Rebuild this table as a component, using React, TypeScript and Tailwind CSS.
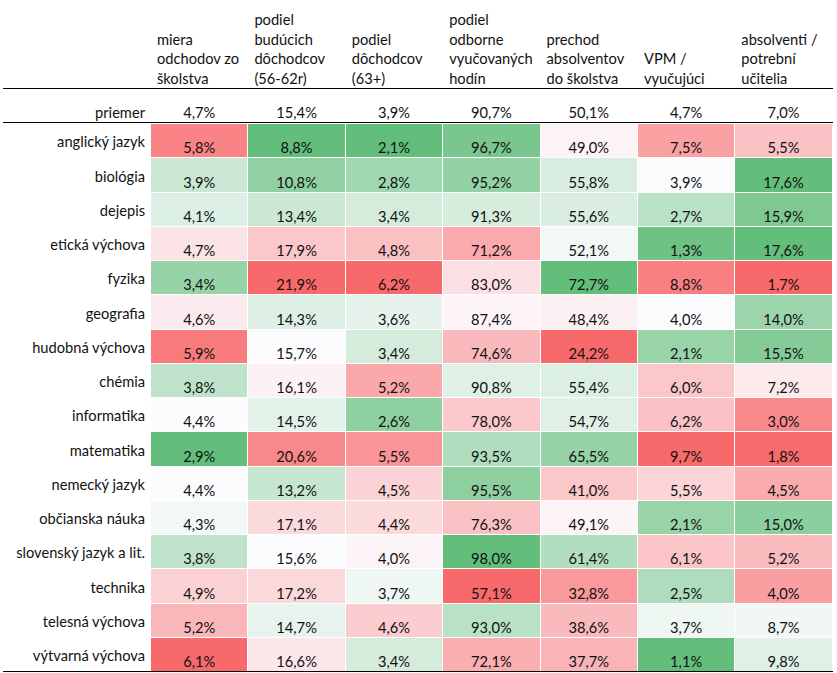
const headers = [
  ['miera', 'odchodov zo', 'školstva'],
  ['podiel', 'budúcich', 'dôchodcov', '(56-62r)'],
  ['podiel', 'dôchodcov', '(63+)'],
  ['podiel', 'odborne', 'vyučovaných', 'hodín'],
  ['prechod', 'absolventov', 'do školstva'],
  ['VPM /', 'vyučujúci'],
  ['absolventi /', 'potrební', 'učitelia'],
]

const average = [4.7, 15.4, 3.9, 90.7, 50.1, 4.7, 7.0]

// true = a higher value is better (green)
const higherIsGreen = [false, false, false, true, true, false, true]

const rows: { label: string; values: number[] }[] = [
  { label: 'anglický jazyk', values: [5.8, 8.8, 2.1, 96.7, 49.0, 7.5, 5.5] },
  { label: 'biológia', values: [3.9, 10.8, 2.8, 95.2, 55.8, 3.9, 17.6] },
  { label: 'dejepis', values: [4.1, 13.4, 3.4, 91.3, 55.6, 2.7, 15.9] },
  { label: 'etická výchova', values: [4.7, 17.9, 4.8, 71.2, 52.1, 1.3, 17.6] },
  { label: 'fyzika', values: [3.4, 21.9, 6.2, 83.0, 72.7, 8.8, 1.7] },
  { label: 'geografia', values: [4.6, 14.3, 3.6, 87.4, 48.4, 4.0, 14.0] },
  { label: 'hudobná výchova', values: [5.9, 15.7, 3.4, 74.6, 24.2, 2.1, 15.5] },
  { label: 'chémia', values: [3.8, 16.1, 5.2, 90.8, 55.4, 6.0, 7.2] },
  { label: 'informatika', values: [4.4, 14.5, 2.6, 78.0, 54.7, 6.2, 3.0] },
  { label: 'matematika', values: [2.9, 20.6, 5.5, 93.5, 65.5, 9.7, 1.8] },
  { label: 'nemecký jazyk', values: [4.4, 13.2, 4.5, 95.5, 41.0, 5.5, 4.5] },
  { label: 'občianska náuka', values: [4.3, 17.1, 4.4, 76.3, 49.1, 2.1, 15.0] },
  { label: 'slovenský jazyk a lit.', values: [3.8, 15.6, 4.0, 98.0, 61.4, 6.1, 5.2] },
  { label: 'technika', values: [4.9, 17.2, 3.7, 57.1, 32.8, 2.5, 4.0] },
  { label: 'telesná výchova', values: [5.2, 14.7, 4.6, 93.0, 38.6, 3.7, 8.7] },
  { label: 'výtvarná výchova', values: [6.1, 16.6, 3.4, 72.1, 37.7, 1.1, 9.8] },
]

const RED = [248, 105, 107]
const WHITE = [252, 252, 255]
const GREEN = [99, 190, 123]

function fmt(v: number) {
  return v.toFixed(1).replace('.', ',') + '%'
}

// three-colour scale per column, midpoint = median
const scales = headers.map((_, c) => {
  const col = rows.map((r) => r.values[c]).sort((a, b) => a - b)
  const n = col.length
  const mid = n % 2 ? col[(n - 1) / 2] : (col[n / 2 - 1] + col[n / 2]) / 2
  return { min: col[0], mid, max: col[n - 1] }
})

function cellColor(v: number, c: number) {
  const { min, mid, max } = scales[c]
  const high = higherIsGreen[c] ? GREEN : RED
  const low = higherIsGreen[c] ? RED : GREEN
  let target = high
  let t = 0
  if (v >= mid) {
    t = max === mid ? 0 : (v - mid) / (max - mid)
  } else {
    target = low
    t = mid === min ? 0 : (mid - v) / (mid - min)
  }
  const rgb = WHITE.map((w, i) => Math.round(w + (target[i] - w) * t))
  return `rgb(${rgb[0]}, ${rgb[1]}, ${rgb[2]})`
}

const grid = 'grid grid-cols-[147px_repeat(7,96.4px)] gap-x-px'

export default function App() {
  return (
    <div
      className="w-[837px] h-[673px] bg-white text-[#111] text-[14.67px] overflow-hidden"
      style={{ fontFamily: 'Lato, "Open Sans", sans-serif' }}
    >
      <div className="ml-[3px] w-[830px]">
        <div className={`${grid} h-[89px] border-b border-black items-end`}>
          <div />
          {headers.map((lines, i) => (
            <div key={i} className="pl-[6px] leading-[19.5px] whitespace-nowrap">
              {lines.map((l) => (
                <div key={l}>{l}</div>
              ))}
            </div>
          ))}
        </div>

        <div className={`${grid} h-[34px] border-b border-black items-end leading-[18px] pb-[0.5px]`}>
          <div className="text-right pr-[5px]">priemer</div>
          {average.map((v, i) => (
            <div key={i} className="text-center">
              {fmt(v)}
            </div>
          ))}
        </div>

        <div className="flex flex-col gap-y-px pt-px border-b border-black">
          {rows.map((row) => (
            <div key={row.label} className={`${grid} h-[33.25px] leading-[18px]`}>
              <div className="flex items-end justify-end pr-[5px] pb-[6px] whitespace-nowrap">
                {row.label}
              </div>
              {row.values.map((v, c) => (
                <div
                  key={c}
                  className="flex items-end justify-center"
                  style={{ backgroundColor: cellColor(v, c) }}
                >
                  {fmt(v)}
                </div>
              ))}
            </div>
          ))}
        </div>
      </div>
    </div>
  )
}
